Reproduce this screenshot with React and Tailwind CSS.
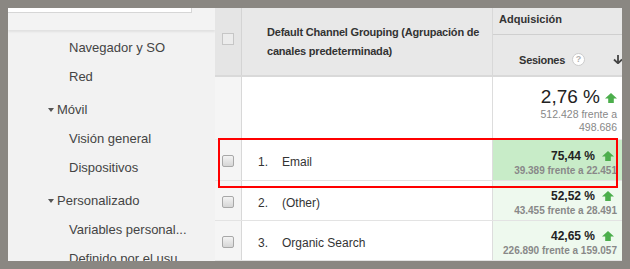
import React from "react";

const Up = ({ className = "" }) => (
  <svg width="12" height="10" viewBox="0 0 12 10" className={className}>
    <path d="M6 0 L12 5.5 L8.8 5.5 L8.8 10 L3.2 10 L3.2 5.5 L0 5.5 Z" fill="#4cae4c" />
  </svg>
);

const Check = () => (
  <div className="w-[12px] h-[12px] rounded-[2px] border border-[#a8a8a8] bg-gradient-to-b from-[#f4f4f4] to-[#d6d6d6]" />
);

const NavItem = ({ children }) => (
  <div className="h-[29px] flex items-center pl-[61px] text-[13px] text-[#444] whitespace-nowrap">{children}</div>
);

const NavGroup = ({ children }) => (
  <div className="h-[29px] mt-[4px] flex items-center pl-[40px] text-[13px] text-[#444]">
    <span className="w-0 h-0 border-l-[3px] border-r-[3px] border-t-[4px] border-l-transparent border-r-transparent border-t-[#555] mr-[3px]" />
    {children}
  </div>
);

const rows = [
  { n: "1.", name: "Email", pct: "75,44 %", sub: "39.389 frente a 22.451", h: "h-[41px]", pt: "pt-[9px]", bg: "bg-[#c8ecc8]" },
  { n: "2.", name: "(Other)", pct: "52,52 %", sub: "43.455 frente a 28.491", h: "h-[40px]", pt: "pt-[8px]", bg: "bg-[#eef9ee]" },
  { n: "3.", name: "Organic Search", pct: "42,65 %", sub: "226.890 frente a 159.057", h: "h-[40px]", pt: "pt-[8px]", bg: "bg-[#eef9ee]" },
];

export default function App() {
  return (
    <div className="w-[630px] h-[269px] bg-[#8a8782] p-[8px] font-['Liberation_Sans',Arial,sans-serif]">
      <div className="relative w-[614px] h-[253px] flex overflow-hidden bg-[#f2f2f2]">
        {/* left nav */}
        <div className="w-[207px] shrink-0 bg-[#f2f2f2]">
          <div className="h-[22px] bg-[#f3f3f3] shadow-[0_2px_2px_rgba(0,0,0,0.07)]">
            <div className="w-[184px] h-[5px] bg-white border-r border-b border-[#d6d6d6]" />
          </div>
          <div className="pt-[3px]">
            <NavItem>Navegador y SO</NavItem>
            <NavItem>Red</NavItem>
            <NavGroup>Móvil</NavGroup>
            <NavItem>Visión general</NavItem>
            <NavItem>Dispositivos</NavItem>
            <NavGroup>Personalizado</NavGroup>
            <NavItem>Variables personal...</NavItem>
            <NavItem>Definido por el usu...</NavItem>
          </div>
        </div>

        {/* table */}
        <div className="w-[407px] shrink-0 flex flex-col bg-white">
          {/* header */}
          <div className="h-[70px] flex border-b-2 border-[#d9d9d9] bg-[#e8e8e8]">
            <div className="w-[27px] border-r border-[#d4d4d4] bg-[#e5e5e5] flex justify-center pt-[25px]">
              <div className="w-[12px] h-[12px] border border-[#c6c6c6] bg-[#ececec]" />
            </div>
            <div className="w-[251px] border-r border-[#d8d8d8] pl-[25px] pr-[8px] pt-[15px] text-[11px] leading-[19px] font-bold text-[#333] tracking-[-0.2px]">
              Default Channel Grouping (Agrupación de canales predeterminada)
            </div>
            <div className="flex-1 flex flex-col">
              <div className="h-[27px] border-b border-[#cfcfcf] pl-[6px] pt-[5px] text-[11px] leading-[13px] font-bold text-[#333]">
                Adquisición
              </div>
              <div className="flex-1 flex items-center justify-end pt-[10px]">
                <span className="text-[11px] font-bold text-[#333] tracking-[-0.3px]">Sesiones</span>
                <span className="ml-[7px] w-[13px] h-[13px] rounded-full border border-[#cccccc] bg-white flex items-center justify-center text-[9px] leading-none text-[#b0b0b0] font-bold">?</span>
                <svg width="10" height="9" viewBox="0 0 10 9" className="ml-[28px] -mr-[1px]">
                  <path d="M5 0 V8 M1 4.5 L5 8.3 L9 4.5" stroke="#444" strokeWidth="1.8" fill="none" />
                </svg>
              </div>
            </div>
          </div>

          {/* summary row */}
          <div className="h-[64px] flex border-b border-[#ececec]">
            <div className="w-[27px] border-r border-[#d8d8d8] bg-[#f5f5f5]" />
            <div className="w-[251px] border-r border-[#dddddd]" />
            <div className="flex-1 pr-[5px] pt-[9px] flex flex-col items-end">
              <div className="flex items-center h-[22px]">
                <span className="text-[19px] leading-[22px] text-[#222]">2,76 %</span>
                <Up className="ml-[5px] mt-[2px]" />
              </div>
              <div className="text-[10.5px] leading-[13px] text-[#888] text-right">512.428 frente a</div>
              <div className="text-[10.5px] leading-[13px] text-[#888] text-right">498.686</div>
            </div>
          </div>

          {rows.map((r) => (
            <div key={r.n} className={`${r.h} flex border-b border-[#e3e3e3] shrink-0`}>
              <div className="w-[27px] border-r border-[#d8d8d8] bg-[#f5f5f5] flex items-center justify-center pt-[2px]">
                <Check />
              </div>
              <div className="w-[251px] border-r border-[#dddddd] flex items-center pl-[16px] pt-[4px] text-[12px] text-[#333]">
                <span className="w-[24px]">{r.n}</span>
                <span>{r.name}</span>
              </div>
              <div className={`flex-1 ${r.bg} pr-[5px] ${r.pt} flex flex-col items-end`}>
                <div className="flex items-center h-[15px]">
                  <span className="text-[12px] leading-[15px] font-bold text-[#222]">{r.pct}</span>
                  <Up className="ml-[7px] mr-[3px] -mt-[2px]" />
                </div>
                <div className="text-[10px] leading-[13px] font-bold text-[#888] whitespace-nowrap">{r.sub}</div>
              </div>
            </div>
          ))}
        </div>

        {/* highlight box */}
        <div className="absolute left-[210px] top-[130px] w-[400px] h-[50px] border-2 border-[#ff0000] pointer-events-none" />
      </div>
    </div>
  );
}
